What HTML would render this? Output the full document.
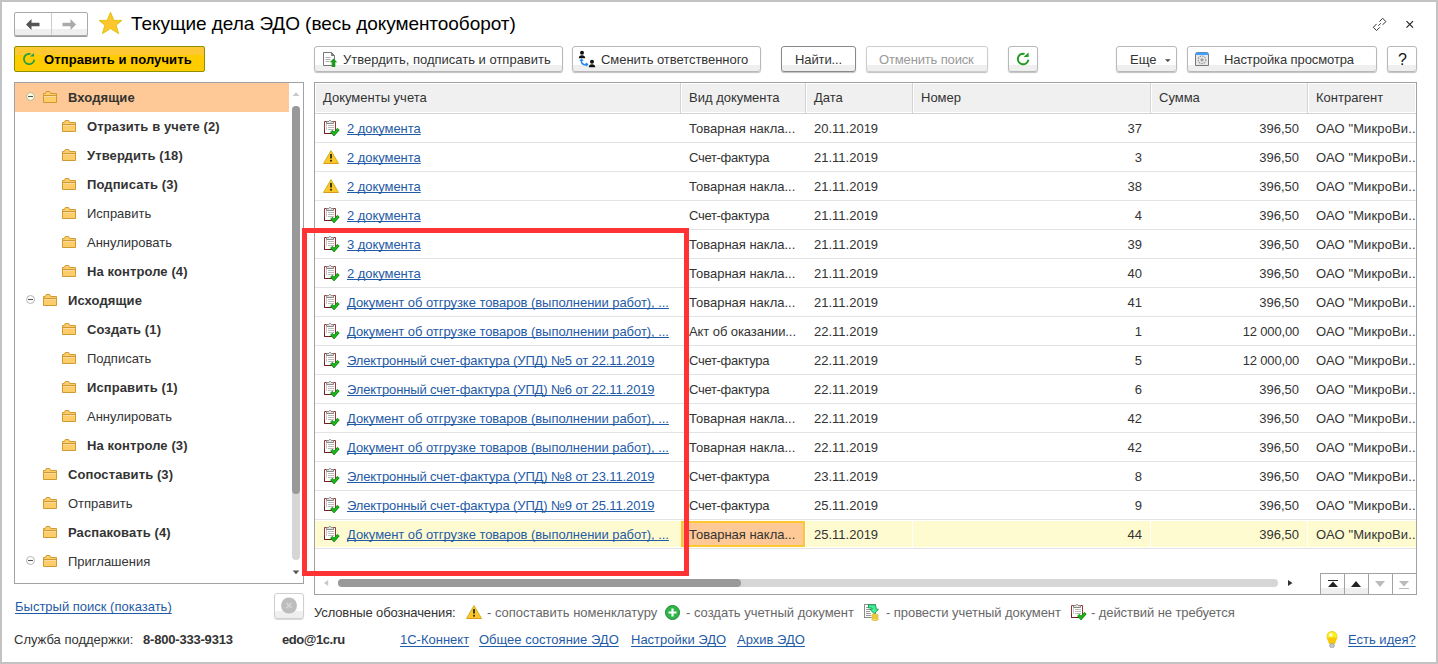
<!DOCTYPE html><html><head><meta charset="utf-8"><style>
*{box-sizing:border-box;margin:0;padding:0}
svg{display:block}
html,body{width:1438px;height:664px;overflow:hidden;background:#fff}
body{font-family:"Liberation Sans",sans-serif;font-size:13px;color:#333;position:relative}
.abs{position:absolute}
#win{position:absolute;left:0;top:0;width:1438px;height:664px;border:2px solid #c3c3c3;background:#fff}
.btn{position:absolute;top:46px;height:26px;border:1px solid #b8b8b8;border-radius:3px;background:linear-gradient(#fff 0,#fff 73%,#efefef 73%,#efefef 100%);box-shadow:0 1px 1px rgba(0,0,0,0.25);white-space:nowrap;color:#333;line-height:25px}
.t{position:absolute;white-space:nowrap;line-height:15px}
.b{font-weight:bold}
a,.lnk{color:#1f5ba6;text-decoration:underline;text-decoration-skip-ink:none}
.tree-row{position:absolute;left:15px;width:275px;height:29px}
.fl{text-underline-offset:2px}
.grow{position:absolute;left:315px;width:1101px;height:29px;border-bottom:1px solid #e3e3e3}
.hcell{position:absolute;top:83px;height:30px;background:#f0f0f0;border:1px solid #fff;border-right-color:#fff}
</style></head><body>
<div id="win"></div>

<div class="abs" style="left:14px;top:12px;width:74px;height:24px;border:1px solid #aaa;border-radius:2px;background:linear-gradient(#fff 0,#fff 72%,#efefef 72%);box-shadow:0 1px 0 #999"></div>
<div class="abs" style="left:51px;top:13px;width:1px;height:22px;background:#ccc"></div>
<svg class="abs" style="left:26px;top:19px" width="14" height="11" viewBox="0 0 14 11"><path d="M0 5.5L5.5 0v3.8h8v3.4h-8V11z" fill="#555"/></svg>
<svg class="abs" style="left:62px;top:19px" width="14" height="11" viewBox="0 0 14 11"><path d="M14 5.5L8.5 0v3.8h-8v3.4h8V11z" fill="#aaa"/></svg>
<svg class="abs" style="left:98px;top:11px" width="25" height="24" viewBox="0 0 25 24"><path d="M12.5 1.2L15.9 9.4H24L18.1 14.2L20.7 22.7L12.5 17.6L4.3 22.7L6.9 14.2L1 9.4H9.1z" fill="#fec52e" stroke="#d8c400" stroke-width="0.9" stroke-linejoin="miter"/></svg>
<div class="t" style="left:131px;top:13px;font-size:19px;line-height:22px;color:#000;letter-spacing:-0.06px">Текущие дела ЭДО (весь документооборот)</div>
<svg class="abs" style="left:1366px;top:12px" width="24" height="24" viewBox="0 0 24 24"><path d="M13.5 9.6L16.6 6.3L19.9 9.5L16.7 12.8M10.6 11.9L7.3 15.3L10.5 18.6L13.8 15.3M12.3 13.8L14.8 11.3" fill="none" stroke="#333" stroke-width="1"/></svg>
<svg class="abs" style="left:1405px;top:20px" width="9" height="9" viewBox="0 0 9 9"><path d="M1.5 1.2l6.5 6.5M8 1.2l-6.5 6.5" stroke="#222" stroke-width="1.2"/></svg>
<div class="abs" style="left:14px;top:46px;width:191px;height:26px;border:1px solid #8c9000;border-radius:2px;background:linear-gradient(#fec832 0,#fec832 33%,#ffcc00 33%)"></div>
<svg class="abs" style="left:21px;top:51px" width="16" height="16" viewBox="0 0 16 16"><path d="M13.3 8.6A5.2 5.2 0 1 1 9.6 3" fill="none" stroke="#1f9d45" stroke-width="1.7"/><path d="M9 5.6L13 5.6L13 2z" fill="#1f9d45"/></svg>
<div class="t b" style="left:44px;top:52px;color:#000;letter-spacing:0.1px">Отправить и получить</div>
<div class="abs" style="left:14px;top:82px;width:290px;height:502px;border:1px solid #a2a2a4"></div>
<div class="abs" style="left:15px;top:83px;width:274px;height:29px;background:#fec996"></div>
<div class="abs" style="left:26px;top:92px"><svg width="9" height="9" viewBox="0 0 9 9"><circle cx="4.5" cy="4.5" r="4" fill="#fdfde6" stroke="#b5b58a"/><path d="M2 4.5h5" stroke="#555" stroke-width="1.1"/></svg></div>
<div class="abs" style="left:43px;top:91px"><svg width="14" height="12" viewBox="0 0 14 12"><path d="M0.5 2.5H2.3L3.3 0.5H6.7L7.7 2.5H13.5V11.5H0.5Z" fill="#fdcd6a" stroke="#cf9a32"/><path d="M1 4.5h12" stroke="#cf9a32"/><path d="M1 5.5h12" stroke="#ffd9a6"/></svg></div>
<div class="t b" style="left:68px;top:90px;letter-spacing:0.1px">Входящие</div>
<div class="abs" style="left:62px;top:120px"><svg width="14" height="12" viewBox="0 0 14 12"><path d="M0.5 2.5H2.3L3.3 0.5H6.7L7.7 2.5H13.5V11.5H0.5Z" fill="#fdcd6a" stroke="#cf9a32"/><path d="M1 4.5h12" stroke="#cf9a32"/><path d="M1 5.5h12" stroke="#ffd9a6"/></svg></div>
<div class="t b" style="left:87px;top:119px;letter-spacing:0.1px">Отразить в учете (2)</div>
<div class="abs" style="left:62px;top:149px"><svg width="14" height="12" viewBox="0 0 14 12"><path d="M0.5 2.5H2.3L3.3 0.5H6.7L7.7 2.5H13.5V11.5H0.5Z" fill="#fdcd6a" stroke="#cf9a32"/><path d="M1 4.5h12" stroke="#cf9a32"/><path d="M1 5.5h12" stroke="#ffd9a6"/></svg></div>
<div class="t b" style="left:87px;top:148px;letter-spacing:0.1px">Утвердить (18)</div>
<div class="abs" style="left:62px;top:178px"><svg width="14" height="12" viewBox="0 0 14 12"><path d="M0.5 2.5H2.3L3.3 0.5H6.7L7.7 2.5H13.5V11.5H0.5Z" fill="#fdcd6a" stroke="#cf9a32"/><path d="M1 4.5h12" stroke="#cf9a32"/><path d="M1 5.5h12" stroke="#ffd9a6"/></svg></div>
<div class="t b" style="left:87px;top:177px;letter-spacing:0.1px">Подписать (3)</div>
<div class="abs" style="left:62px;top:207px"><svg width="14" height="12" viewBox="0 0 14 12"><path d="M0.5 2.5H2.3L3.3 0.5H6.7L7.7 2.5H13.5V11.5H0.5Z" fill="#fdcd6a" stroke="#cf9a32"/><path d="M1 4.5h12" stroke="#cf9a32"/><path d="M1 5.5h12" stroke="#ffd9a6"/></svg></div>
<div class="t" style="left:87px;top:206px;">Исправить</div>
<div class="abs" style="left:62px;top:236px"><svg width="14" height="12" viewBox="0 0 14 12"><path d="M0.5 2.5H2.3L3.3 0.5H6.7L7.7 2.5H13.5V11.5H0.5Z" fill="#fdcd6a" stroke="#cf9a32"/><path d="M1 4.5h12" stroke="#cf9a32"/><path d="M1 5.5h12" stroke="#ffd9a6"/></svg></div>
<div class="t" style="left:87px;top:235px;">Аннулировать</div>
<div class="abs" style="left:62px;top:265px"><svg width="14" height="12" viewBox="0 0 14 12"><path d="M0.5 2.5H2.3L3.3 0.5H6.7L7.7 2.5H13.5V11.5H0.5Z" fill="#fdcd6a" stroke="#cf9a32"/><path d="M1 4.5h12" stroke="#cf9a32"/><path d="M1 5.5h12" stroke="#ffd9a6"/></svg></div>
<div class="t b" style="left:87px;top:264px;letter-spacing:0.1px">На контроле (4)</div>
<div class="abs" style="left:26px;top:295px"><svg width="9" height="9" viewBox="0 0 9 9"><circle cx="4.5" cy="4.5" r="4" fill="#fff" stroke="#b4b4b4"/><path d="M2 4.5h5" stroke="#555" stroke-width="1.1"/></svg></div>
<div class="abs" style="left:43px;top:294px"><svg width="14" height="12" viewBox="0 0 14 12"><path d="M0.5 2.5H2.3L3.3 0.5H6.7L7.7 2.5H13.5V11.5H0.5Z" fill="#fdcd6a" stroke="#cf9a32"/><path d="M1 4.5h12" stroke="#cf9a32"/><path d="M1 5.5h12" stroke="#ffd9a6"/></svg></div>
<div class="t b" style="left:68px;top:293px;letter-spacing:0.1px">Исходящие</div>
<div class="abs" style="left:62px;top:323px"><svg width="14" height="12" viewBox="0 0 14 12"><path d="M0.5 2.5H2.3L3.3 0.5H6.7L7.7 2.5H13.5V11.5H0.5Z" fill="#fdcd6a" stroke="#cf9a32"/><path d="M1 4.5h12" stroke="#cf9a32"/><path d="M1 5.5h12" stroke="#ffd9a6"/></svg></div>
<div class="t b" style="left:87px;top:322px;letter-spacing:0.1px">Создать (1)</div>
<div class="abs" style="left:62px;top:352px"><svg width="14" height="12" viewBox="0 0 14 12"><path d="M0.5 2.5H2.3L3.3 0.5H6.7L7.7 2.5H13.5V11.5H0.5Z" fill="#fdcd6a" stroke="#cf9a32"/><path d="M1 4.5h12" stroke="#cf9a32"/><path d="M1 5.5h12" stroke="#ffd9a6"/></svg></div>
<div class="t" style="left:87px;top:351px;">Подписать</div>
<div class="abs" style="left:62px;top:381px"><svg width="14" height="12" viewBox="0 0 14 12"><path d="M0.5 2.5H2.3L3.3 0.5H6.7L7.7 2.5H13.5V11.5H0.5Z" fill="#fdcd6a" stroke="#cf9a32"/><path d="M1 4.5h12" stroke="#cf9a32"/><path d="M1 5.5h12" stroke="#ffd9a6"/></svg></div>
<div class="t b" style="left:87px;top:380px;letter-spacing:0.1px">Исправить (1)</div>
<div class="abs" style="left:62px;top:410px"><svg width="14" height="12" viewBox="0 0 14 12"><path d="M0.5 2.5H2.3L3.3 0.5H6.7L7.7 2.5H13.5V11.5H0.5Z" fill="#fdcd6a" stroke="#cf9a32"/><path d="M1 4.5h12" stroke="#cf9a32"/><path d="M1 5.5h12" stroke="#ffd9a6"/></svg></div>
<div class="t" style="left:87px;top:409px;">Аннулировать</div>
<div class="abs" style="left:62px;top:439px"><svg width="14" height="12" viewBox="0 0 14 12"><path d="M0.5 2.5H2.3L3.3 0.5H6.7L7.7 2.5H13.5V11.5H0.5Z" fill="#fdcd6a" stroke="#cf9a32"/><path d="M1 4.5h12" stroke="#cf9a32"/><path d="M1 5.5h12" stroke="#ffd9a6"/></svg></div>
<div class="t b" style="left:87px;top:438px;letter-spacing:0.1px">На контроле (3)</div>
<div class="abs" style="left:43px;top:468px"><svg width="14" height="12" viewBox="0 0 14 12"><path d="M0.5 2.5H2.3L3.3 0.5H6.7L7.7 2.5H13.5V11.5H0.5Z" fill="#fdcd6a" stroke="#cf9a32"/><path d="M1 4.5h12" stroke="#cf9a32"/><path d="M1 5.5h12" stroke="#ffd9a6"/></svg></div>
<div class="t b" style="left:68px;top:467px;letter-spacing:0.1px">Сопоставить (3)</div>
<div class="abs" style="left:43px;top:497px"><svg width="14" height="12" viewBox="0 0 14 12"><path d="M0.5 2.5H2.3L3.3 0.5H6.7L7.7 2.5H13.5V11.5H0.5Z" fill="#fdcd6a" stroke="#cf9a32"/><path d="M1 4.5h12" stroke="#cf9a32"/><path d="M1 5.5h12" stroke="#ffd9a6"/></svg></div>
<div class="t" style="left:68px;top:496px;">Отправить</div>
<div class="abs" style="left:43px;top:526px"><svg width="14" height="12" viewBox="0 0 14 12"><path d="M0.5 2.5H2.3L3.3 0.5H6.7L7.7 2.5H13.5V11.5H0.5Z" fill="#fdcd6a" stroke="#cf9a32"/><path d="M1 4.5h12" stroke="#cf9a32"/><path d="M1 5.5h12" stroke="#ffd9a6"/></svg></div>
<div class="t b" style="left:68px;top:525px;letter-spacing:0.1px">Распаковать (4)</div>
<div class="abs" style="left:26px;top:556px"><svg width="9" height="9" viewBox="0 0 9 9"><circle cx="4.5" cy="4.5" r="4" fill="#fff" stroke="#b4b4b4"/><path d="M2 4.5h5" stroke="#555" stroke-width="1.1"/></svg></div>
<div class="abs" style="left:43px;top:555px"><svg width="14" height="12" viewBox="0 0 14 12"><path d="M0.5 2.5H2.3L3.3 0.5H6.7L7.7 2.5H13.5V11.5H0.5Z" fill="#fdcd6a" stroke="#cf9a32"/><path d="M1 4.5h12" stroke="#cf9a32"/><path d="M1 5.5h12" stroke="#ffd9a6"/></svg></div>
<div class="t" style="left:68px;top:554px;">Приглашения</div>
<svg class="abs" style="left:292px;top:92px" width="8" height="5" viewBox="0 0 8 5"><path d="M4 0.3L7.3 4H0.7z" fill="#c8c8c8"/></svg>
<div class="abs" style="left:292px;top:106px;width:8px;height:454px;border-radius:4px;background:#d6d6d6"></div>
<div class="abs" style="left:292px;top:106px;width:8px;height:388px;border-radius:4px;background:#999"></div>
<svg class="abs" style="left:292px;top:570px" width="8" height="5" viewBox="0 0 8 5"><path d="M0.7 0.5H7.3L4 4.3z" fill="#555"/></svg>
<div class="btn" style="left:314px;width:249px;"><svg class="abs" style="left:8px;top:5px" width="16" height="16" viewBox="0 0 16 16"><path d="M0.5 0.5H8.5L11.5 3.5V13.5H0.5Z" fill="#fff" stroke="#777"/><path d="M8.5 0.5V3.5H11.5" fill="#888" stroke="#777"/><path d="M2.5 5.5h5M2.5 7.5h5M2.5 9.5h4" stroke="#aaa"/><path d="M10.5 6.5L14.3 10.3H12.3V15H8.7V10.3H6.7Z" fill="#1c9a1c"/></svg><span class="abs" style="left:28px;top:0">Утвердить, подписать и отправить</span></div>
<div class="btn" style="left:572px;width:189px;"><svg class="abs" style="left:3px;top:3px" width="22" height="19" viewBox="0 0 22 19"><circle cx="6" cy="2.8" r="2" fill="#111"/><path d="M2.8 8.2a3.2 3 0 0 1 6.4 0z" fill="#111"/><circle cx="16" cy="11.8" r="2" fill="#111"/><path d="M12.8 17.2a3.2 3 0 0 1 6.4 0z" fill="#111"/><path d="M5.5 9.5V11.8Q5.5 14 8.5 14.8H10" fill="none" stroke="#2a8cf0" stroke-width="1.6"/><path d="M3.3 11L5.5 8.2L7.7 11z" fill="#2a8cf0"/><path d="M10.5 12.6L12.5 14.6L10.5 16.6L8.5 14.6z" fill="#2a8cf0"/></svg><span class="abs" style="left:28px;top:0;letter-spacing:-0.05px">Сменить ответственного</span></div>
<div class="btn" style="left:781px;width:75px;border-color:#888"><span class="abs" style="left:13px;top:0;letter-spacing:-0.1px">Найти...</span></div>
<div class="btn" style="left:866px;width:122px;border-color:#ccc"><span class="abs" style="left:12px;top:0;color:#999;letter-spacing:-0.15px">Отменить поиск</span></div>
<div class="btn" style="left:1008px;width:30px;"><svg class="abs" style="left:6px;top:4px" width="16" height="16" viewBox="0 0 16 16"><path d="M13.4 8.6A5.3 5.3 0 1 1 9.6 2.9" fill="none" stroke="#1e9a1e" stroke-width="1.9"/><path d="M8.6 6L13.6 6L13.6 1.6z" fill="#1e9a1e"/></svg></div>
<div class="btn" style="left:1116px;width:61px;"><span class="abs" style="left:13px;top:0">Еще</span><svg class="abs" style="left:48px;top:12px" width="6" height="4"><path d="M0 0.2h5.6L2.8 3z" fill="#444"/></svg></div>
<div class="btn" style="left:1187px;width:190px;"><svg class="abs" style="left:7px;top:5px" width="14" height="14" viewBox="0 0 14 14"><path d="M0.5 2.5Q0.5 0.5 2.5 0.5H11.5Q13.5 0.5 13.5 2.5V13.5H0.5Z" fill="#e8e8e8" stroke="#777"/><path d="M0.5 3V2Q0.5 0.5 2.5 0.5H11.5Q13.5 0.5 13.5 2V3Z" fill="#3ea0ff"/><circle cx="7" cy="7.8" r="3.8" fill="none" stroke="#999" stroke-width="1.2" stroke-dasharray="1.6 0.9"/><circle cx="7" cy="7.8" r="1.6" fill="#999"/></svg><span class="abs" style="left:36px;top:0;letter-spacing:-0.1px">Настройка просмотра</span></div>
<div class="btn" style="left:1387px;width:30px;"><span class="abs" style="left:10px;top:0;color:#111;font-size:16px">?</span></div>
<div class="abs" style="left:314px;top:82px;width:1103px;height:513px;border:1px solid #a2a2a4"></div>
<div class="abs" style="left:315px;top:83px;width:366px;height:30px;background:#f0f0f0;border:1px solid #fff"></div>
<div class="t" style="left:323px;top:90px">Документы учета</div>
<div class="abs" style="left:681px;top:83px;width:125px;height:30px;background:#f0f0f0;border:1px solid #fff"></div>
<div class="t" style="left:689px;top:90px">Вид документа</div>
<div class="abs" style="left:806px;top:83px;width:107px;height:30px;background:#f0f0f0;border:1px solid #fff"></div>
<div class="t" style="left:814px;top:90px">Дата</div>
<div class="abs" style="left:913px;top:83px;width:238px;height:30px;background:#f0f0f0;border:1px solid #fff"></div>
<div class="t" style="left:921px;top:90px">Номер</div>
<div class="abs" style="left:1151px;top:83px;width:157px;height:30px;background:#f0f0f0;border:1px solid #fff"></div>
<div class="t" style="left:1159px;top:90px">Сумма</div>
<div class="abs" style="left:1308px;top:83px;width:108px;height:30px;background:#f0f0f0;border:1px solid #fff"></div>
<div class="t" style="left:1316px;top:90px">Контрагент</div>
<div class="abs" style="left:680px;top:83px;width:1px;height:30px;background:#d4d4d4"></div>
<div class="abs" style="left:805px;top:83px;width:1px;height:30px;background:#d4d4d4"></div>
<div class="abs" style="left:912px;top:83px;width:1px;height:30px;background:#d4d4d4"></div>
<div class="abs" style="left:1150px;top:83px;width:1px;height:30px;background:#d4d4d4"></div>
<div class="abs" style="left:1307px;top:83px;width:1px;height:30px;background:#d4d4d4"></div>
<div class="abs" style="left:315px;top:113px;width:1101px;height:1px;background:#d4d4d4"></div>
<div class="abs" style="left:315px;top:114px;width:1101px;height:28px;background:#fff"></div>
<div class="abs" style="left:315px;top:142px;width:1101px;height:1px;background:#e3e3e3"></div>
<div class="abs" style="left:324px;top:120px"><svg width="16" height="16" viewBox="0 0 16 16"><path d="M0.5 1.5h11v12h-11z" fill="#fff" stroke="#9c3434"/><path d="M0.5 9.5v4h7" fill="none" stroke="#6b2020"/><path d="M2.5 3.5v-2h2l1-1h1l1 1h2v2z" fill="#e0e0e0" stroke="#888"/><path d="M4 5.5h6M4 7.5h6M4 9.5h6" stroke="#bbb"/><path d="M2 5h1M2 7h1M2 9h1" stroke="#999"/><path d="M7.3 11l2.7 3 4.5-5" fill="none" stroke="#137a13" stroke-width="3.2"/><path d="M7.3 11l2.7 3 4.5-5" fill="none" stroke="#19c219" stroke-width="1.6"/></svg></div>
<div class="t lnk" style="left:347px;top:121px;letter-spacing:-0.05px">2 документа</div>
<div class="t" style="left:689px;top:121px;color:#333;letter-spacing:0">Товарная накла...</div>
<div class="t" style="left:814px;top:121px">20.11.2019</div>
<div class="t" style="right:296px;top:121px">37</div>
<div class="t" style="right:139px;top:121px;letter-spacing:0">396,50</div>
<div class="t" style="left:1316px;top:121px;width:100px;overflow:hidden;letter-spacing:0.12px">ОАО "МикроВи..</div>
<div class="abs" style="left:315px;top:143px;width:1101px;height:28px;background:#fff"></div>
<div class="abs" style="left:315px;top:171px;width:1101px;height:1px;background:#e3e3e3"></div>
<div class="abs" style="left:323px;top:150px"><svg width="16" height="14" viewBox="0 0 16 14"><path d="M8 0.6L15.5 13.5H0.5z" fill="#fdc72a" stroke="#c8b420" stroke-linejoin="round"/><path d="M1 13.5h14" stroke="#d99a1a"/><path d="M8 4v4.5" stroke="#2a2a00" stroke-width="1.8"/><rect x="7.1" y="9.8" width="1.8" height="1.8" fill="#2a2a00"/></svg></div>
<div class="t lnk" style="left:347px;top:150px;letter-spacing:-0.05px">2 документа</div>
<div class="t" style="left:689px;top:150px;color:#333;letter-spacing:-0.3px">Счет-фактура</div>
<div class="t" style="left:814px;top:150px">21.11.2019</div>
<div class="t" style="right:296px;top:150px">3</div>
<div class="t" style="right:139px;top:150px;letter-spacing:0">396,50</div>
<div class="t" style="left:1316px;top:150px;width:100px;overflow:hidden;letter-spacing:0.12px">ОАО "МикроВи..</div>
<div class="abs" style="left:315px;top:172px;width:1101px;height:28px;background:#fff"></div>
<div class="abs" style="left:315px;top:200px;width:1101px;height:1px;background:#e3e3e3"></div>
<div class="abs" style="left:323px;top:179px"><svg width="16" height="14" viewBox="0 0 16 14"><path d="M8 0.6L15.5 13.5H0.5z" fill="#fdc72a" stroke="#c8b420" stroke-linejoin="round"/><path d="M1 13.5h14" stroke="#d99a1a"/><path d="M8 4v4.5" stroke="#2a2a00" stroke-width="1.8"/><rect x="7.1" y="9.8" width="1.8" height="1.8" fill="#2a2a00"/></svg></div>
<div class="t lnk" style="left:347px;top:179px;letter-spacing:-0.05px">2 документа</div>
<div class="t" style="left:689px;top:179px;color:#333;letter-spacing:0">Товарная накла...</div>
<div class="t" style="left:814px;top:179px">21.11.2019</div>
<div class="t" style="right:296px;top:179px">38</div>
<div class="t" style="right:139px;top:179px;letter-spacing:0">396,50</div>
<div class="t" style="left:1316px;top:179px;width:100px;overflow:hidden;letter-spacing:0.12px">ОАО "МикроВи..</div>
<div class="abs" style="left:315px;top:201px;width:1101px;height:28px;background:#fff"></div>
<div class="abs" style="left:315px;top:229px;width:1101px;height:1px;background:#e3e3e3"></div>
<div class="abs" style="left:324px;top:207px"><svg width="16" height="16" viewBox="0 0 16 16"><path d="M0.5 1.5h11v12h-11z" fill="#fff" stroke="#9c3434"/><path d="M0.5 9.5v4h7" fill="none" stroke="#6b2020"/><path d="M2.5 3.5v-2h2l1-1h1l1 1h2v2z" fill="#e0e0e0" stroke="#888"/><path d="M4 5.5h6M4 7.5h6M4 9.5h6" stroke="#bbb"/><path d="M2 5h1M2 7h1M2 9h1" stroke="#999"/><path d="M7.3 11l2.7 3 4.5-5" fill="none" stroke="#137a13" stroke-width="3.2"/><path d="M7.3 11l2.7 3 4.5-5" fill="none" stroke="#19c219" stroke-width="1.6"/></svg></div>
<div class="t lnk" style="left:347px;top:208px;letter-spacing:-0.05px">2 документа</div>
<div class="t" style="left:689px;top:208px;color:#333;letter-spacing:-0.3px">Счет-фактура</div>
<div class="t" style="left:814px;top:208px">21.11.2019</div>
<div class="t" style="right:296px;top:208px">4</div>
<div class="t" style="right:139px;top:208px;letter-spacing:0">396,50</div>
<div class="t" style="left:1316px;top:208px;width:100px;overflow:hidden;letter-spacing:0.12px">ОАО "МикроВи..</div>
<div class="abs" style="left:315px;top:230px;width:1101px;height:28px;background:#fff"></div>
<div class="abs" style="left:315px;top:258px;width:1101px;height:1px;background:#e3e3e3"></div>
<div class="abs" style="left:324px;top:236px"><svg width="16" height="16" viewBox="0 0 16 16"><path d="M0.5 1.5h11v12h-11z" fill="#fff" stroke="#9c3434"/><path d="M0.5 9.5v4h7" fill="none" stroke="#6b2020"/><path d="M2.5 3.5v-2h2l1-1h1l1 1h2v2z" fill="#e0e0e0" stroke="#888"/><path d="M4 5.5h6M4 7.5h6M4 9.5h6" stroke="#bbb"/><path d="M2 5h1M2 7h1M2 9h1" stroke="#999"/><path d="M7.3 11l2.7 3 4.5-5" fill="none" stroke="#137a13" stroke-width="3.2"/><path d="M7.3 11l2.7 3 4.5-5" fill="none" stroke="#19c219" stroke-width="1.6"/></svg></div>
<div class="t lnk" style="left:347px;top:237px;letter-spacing:-0.05px">3 документа</div>
<div class="t" style="left:689px;top:237px;color:#333;letter-spacing:0">Товарная накла...</div>
<div class="t" style="left:814px;top:237px">21.11.2019</div>
<div class="t" style="right:296px;top:237px">39</div>
<div class="t" style="right:139px;top:237px;letter-spacing:0">396,50</div>
<div class="t" style="left:1316px;top:237px;width:100px;overflow:hidden;letter-spacing:0.12px">ОАО "МикроВи..</div>
<div class="abs" style="left:315px;top:259px;width:1101px;height:28px;background:#fff"></div>
<div class="abs" style="left:315px;top:287px;width:1101px;height:1px;background:#e3e3e3"></div>
<div class="abs" style="left:324px;top:265px"><svg width="16" height="16" viewBox="0 0 16 16"><path d="M0.5 1.5h11v12h-11z" fill="#fff" stroke="#9c3434"/><path d="M0.5 9.5v4h7" fill="none" stroke="#6b2020"/><path d="M2.5 3.5v-2h2l1-1h1l1 1h2v2z" fill="#e0e0e0" stroke="#888"/><path d="M4 5.5h6M4 7.5h6M4 9.5h6" stroke="#bbb"/><path d="M2 5h1M2 7h1M2 9h1" stroke="#999"/><path d="M7.3 11l2.7 3 4.5-5" fill="none" stroke="#137a13" stroke-width="3.2"/><path d="M7.3 11l2.7 3 4.5-5" fill="none" stroke="#19c219" stroke-width="1.6"/></svg></div>
<div class="t lnk" style="left:347px;top:266px;letter-spacing:-0.05px">2 документа</div>
<div class="t" style="left:689px;top:266px;color:#333;letter-spacing:0">Товарная накла...</div>
<div class="t" style="left:814px;top:266px">21.11.2019</div>
<div class="t" style="right:296px;top:266px">40</div>
<div class="t" style="right:139px;top:266px;letter-spacing:0">396,50</div>
<div class="t" style="left:1316px;top:266px;width:100px;overflow:hidden;letter-spacing:0.12px">ОАО "МикроВи..</div>
<div class="abs" style="left:315px;top:288px;width:1101px;height:28px;background:#fff"></div>
<div class="abs" style="left:315px;top:316px;width:1101px;height:1px;background:#e3e3e3"></div>
<div class="abs" style="left:324px;top:294px"><svg width="16" height="16" viewBox="0 0 16 16"><path d="M0.5 1.5h11v12h-11z" fill="#fff" stroke="#9c3434"/><path d="M0.5 9.5v4h7" fill="none" stroke="#6b2020"/><path d="M2.5 3.5v-2h2l1-1h1l1 1h2v2z" fill="#e0e0e0" stroke="#888"/><path d="M4 5.5h6M4 7.5h6M4 9.5h6" stroke="#bbb"/><path d="M2 5h1M2 7h1M2 9h1" stroke="#999"/><path d="M7.3 11l2.7 3 4.5-5" fill="none" stroke="#137a13" stroke-width="3.2"/><path d="M7.3 11l2.7 3 4.5-5" fill="none" stroke="#19c219" stroke-width="1.6"/></svg></div>
<div class="t lnk" style="left:347px;top:295px;letter-spacing:-0.05px">Документ об отгрузке товаров (выполнении работ), ...</div>
<div class="t" style="left:689px;top:295px;color:#333;letter-spacing:0">Товарная накла...</div>
<div class="t" style="left:814px;top:295px">21.11.2019</div>
<div class="t" style="right:296px;top:295px">41</div>
<div class="t" style="right:139px;top:295px;letter-spacing:0">396,50</div>
<div class="t" style="left:1316px;top:295px;width:100px;overflow:hidden;letter-spacing:0.12px">ОАО "МикроВи..</div>
<div class="abs" style="left:315px;top:317px;width:1101px;height:28px;background:#fff"></div>
<div class="abs" style="left:315px;top:345px;width:1101px;height:1px;background:#e3e3e3"></div>
<div class="abs" style="left:324px;top:323px"><svg width="16" height="16" viewBox="0 0 16 16"><path d="M0.5 1.5h11v12h-11z" fill="#fff" stroke="#9c3434"/><path d="M0.5 9.5v4h7" fill="none" stroke="#6b2020"/><path d="M2.5 3.5v-2h2l1-1h1l1 1h2v2z" fill="#e0e0e0" stroke="#888"/><path d="M4 5.5h6M4 7.5h6M4 9.5h6" stroke="#bbb"/><path d="M2 5h1M2 7h1M2 9h1" stroke="#999"/><path d="M7.3 11l2.7 3 4.5-5" fill="none" stroke="#137a13" stroke-width="3.2"/><path d="M7.3 11l2.7 3 4.5-5" fill="none" stroke="#19c219" stroke-width="1.6"/></svg></div>
<div class="t lnk" style="left:347px;top:324px;letter-spacing:-0.05px">Документ об отгрузке товаров (выполнении работ), ...</div>
<div class="t" style="left:689px;top:324px;color:#333;letter-spacing:-0.08px">Акт об оказании...</div>
<div class="t" style="left:814px;top:324px">22.11.2019</div>
<div class="t" style="right:296px;top:324px">1</div>
<div class="t" style="right:139px;top:324px;letter-spacing:-0.18px">12 000,00</div>
<div class="t" style="left:1316px;top:324px;width:100px;overflow:hidden;letter-spacing:0.12px">ОАО "МикроВи..</div>
<div class="abs" style="left:315px;top:346px;width:1101px;height:28px;background:#fff"></div>
<div class="abs" style="left:315px;top:374px;width:1101px;height:1px;background:#e3e3e3"></div>
<div class="abs" style="left:324px;top:352px"><svg width="16" height="16" viewBox="0 0 16 16"><path d="M0.5 1.5h11v12h-11z" fill="#fff" stroke="#9c3434"/><path d="M0.5 9.5v4h7" fill="none" stroke="#6b2020"/><path d="M2.5 3.5v-2h2l1-1h1l1 1h2v2z" fill="#e0e0e0" stroke="#888"/><path d="M4 5.5h6M4 7.5h6M4 9.5h6" stroke="#bbb"/><path d="M2 5h1M2 7h1M2 9h1" stroke="#999"/><path d="M7.3 11l2.7 3 4.5-5" fill="none" stroke="#137a13" stroke-width="3.2"/><path d="M7.3 11l2.7 3 4.5-5" fill="none" stroke="#19c219" stroke-width="1.6"/></svg></div>
<div class="t lnk" style="left:347px;top:353px;letter-spacing:-0.12px">Электронный счет-фактура (УПД) №5 от 22.11.2019</div>
<div class="t" style="left:689px;top:353px;color:#333;letter-spacing:-0.3px">Счет-фактура</div>
<div class="t" style="left:814px;top:353px">22.11.2019</div>
<div class="t" style="right:296px;top:353px">5</div>
<div class="t" style="right:139px;top:353px;letter-spacing:-0.18px">12 000,00</div>
<div class="t" style="left:1316px;top:353px;width:100px;overflow:hidden;letter-spacing:0.12px">ОАО "МикроВи..</div>
<div class="abs" style="left:315px;top:375px;width:1101px;height:28px;background:#fff"></div>
<div class="abs" style="left:315px;top:403px;width:1101px;height:1px;background:#e3e3e3"></div>
<div class="abs" style="left:324px;top:381px"><svg width="16" height="16" viewBox="0 0 16 16"><path d="M0.5 1.5h11v12h-11z" fill="#fff" stroke="#9c3434"/><path d="M0.5 9.5v4h7" fill="none" stroke="#6b2020"/><path d="M2.5 3.5v-2h2l1-1h1l1 1h2v2z" fill="#e0e0e0" stroke="#888"/><path d="M4 5.5h6M4 7.5h6M4 9.5h6" stroke="#bbb"/><path d="M2 5h1M2 7h1M2 9h1" stroke="#999"/><path d="M7.3 11l2.7 3 4.5-5" fill="none" stroke="#137a13" stroke-width="3.2"/><path d="M7.3 11l2.7 3 4.5-5" fill="none" stroke="#19c219" stroke-width="1.6"/></svg></div>
<div class="t lnk" style="left:347px;top:382px;letter-spacing:-0.12px">Электронный счет-фактура (УПД) №6 от 22.11.2019</div>
<div class="t" style="left:689px;top:382px;color:#333;letter-spacing:-0.3px">Счет-фактура</div>
<div class="t" style="left:814px;top:382px">22.11.2019</div>
<div class="t" style="right:296px;top:382px">6</div>
<div class="t" style="right:139px;top:382px;letter-spacing:0">396,50</div>
<div class="t" style="left:1316px;top:382px;width:100px;overflow:hidden;letter-spacing:0.12px">ОАО "МикроВи..</div>
<div class="abs" style="left:315px;top:404px;width:1101px;height:28px;background:#fff"></div>
<div class="abs" style="left:315px;top:432px;width:1101px;height:1px;background:#e3e3e3"></div>
<div class="abs" style="left:324px;top:410px"><svg width="16" height="16" viewBox="0 0 16 16"><path d="M0.5 1.5h11v12h-11z" fill="#fff" stroke="#9c3434"/><path d="M0.5 9.5v4h7" fill="none" stroke="#6b2020"/><path d="M2.5 3.5v-2h2l1-1h1l1 1h2v2z" fill="#e0e0e0" stroke="#888"/><path d="M4 5.5h6M4 7.5h6M4 9.5h6" stroke="#bbb"/><path d="M2 5h1M2 7h1M2 9h1" stroke="#999"/><path d="M7.3 11l2.7 3 4.5-5" fill="none" stroke="#137a13" stroke-width="3.2"/><path d="M7.3 11l2.7 3 4.5-5" fill="none" stroke="#19c219" stroke-width="1.6"/></svg></div>
<div class="t lnk" style="left:347px;top:411px;letter-spacing:-0.05px">Документ об отгрузке товаров (выполнении работ), ...</div>
<div class="t" style="left:689px;top:411px;color:#333;letter-spacing:0">Товарная накла...</div>
<div class="t" style="left:814px;top:411px">22.11.2019</div>
<div class="t" style="right:296px;top:411px">42</div>
<div class="t" style="right:139px;top:411px;letter-spacing:0">396,50</div>
<div class="t" style="left:1316px;top:411px;width:100px;overflow:hidden;letter-spacing:0.12px">ОАО "МикроВи..</div>
<div class="abs" style="left:315px;top:433px;width:1101px;height:28px;background:#fff"></div>
<div class="abs" style="left:315px;top:461px;width:1101px;height:1px;background:#e3e3e3"></div>
<div class="abs" style="left:324px;top:439px"><svg width="16" height="16" viewBox="0 0 16 16"><path d="M0.5 1.5h11v12h-11z" fill="#fff" stroke="#9c3434"/><path d="M0.5 9.5v4h7" fill="none" stroke="#6b2020"/><path d="M2.5 3.5v-2h2l1-1h1l1 1h2v2z" fill="#e0e0e0" stroke="#888"/><path d="M4 5.5h6M4 7.5h6M4 9.5h6" stroke="#bbb"/><path d="M2 5h1M2 7h1M2 9h1" stroke="#999"/><path d="M7.3 11l2.7 3 4.5-5" fill="none" stroke="#137a13" stroke-width="3.2"/><path d="M7.3 11l2.7 3 4.5-5" fill="none" stroke="#19c219" stroke-width="1.6"/></svg></div>
<div class="t lnk" style="left:347px;top:440px;letter-spacing:-0.05px">Документ об отгрузке товаров (выполнении работ), ...</div>
<div class="t" style="left:689px;top:440px;color:#333;letter-spacing:0">Товарная накла...</div>
<div class="t" style="left:814px;top:440px">22.11.2019</div>
<div class="t" style="right:296px;top:440px">42</div>
<div class="t" style="right:139px;top:440px;letter-spacing:0">396,50</div>
<div class="t" style="left:1316px;top:440px;width:100px;overflow:hidden;letter-spacing:0.12px">ОАО "МикроВи..</div>
<div class="abs" style="left:315px;top:462px;width:1101px;height:28px;background:#fff"></div>
<div class="abs" style="left:315px;top:490px;width:1101px;height:1px;background:#e3e3e3"></div>
<div class="abs" style="left:324px;top:468px"><svg width="16" height="16" viewBox="0 0 16 16"><path d="M0.5 1.5h11v12h-11z" fill="#fff" stroke="#9c3434"/><path d="M0.5 9.5v4h7" fill="none" stroke="#6b2020"/><path d="M2.5 3.5v-2h2l1-1h1l1 1h2v2z" fill="#e0e0e0" stroke="#888"/><path d="M4 5.5h6M4 7.5h6M4 9.5h6" stroke="#bbb"/><path d="M2 5h1M2 7h1M2 9h1" stroke="#999"/><path d="M7.3 11l2.7 3 4.5-5" fill="none" stroke="#137a13" stroke-width="3.2"/><path d="M7.3 11l2.7 3 4.5-5" fill="none" stroke="#19c219" stroke-width="1.6"/></svg></div>
<div class="t lnk" style="left:347px;top:469px;letter-spacing:-0.12px">Электронный счет-фактура (УПД) №8 от 23.11.2019</div>
<div class="t" style="left:689px;top:469px;color:#333;letter-spacing:-0.3px">Счет-фактура</div>
<div class="t" style="left:814px;top:469px">23.11.2019</div>
<div class="t" style="right:296px;top:469px">8</div>
<div class="t" style="right:139px;top:469px;letter-spacing:0">396,50</div>
<div class="t" style="left:1316px;top:469px;width:100px;overflow:hidden;letter-spacing:0.12px">ОАО "МикроВи..</div>
<div class="abs" style="left:315px;top:491px;width:1101px;height:28px;background:#fff"></div>
<div class="abs" style="left:315px;top:519px;width:1101px;height:1px;background:#e3e3e3"></div>
<div class="abs" style="left:324px;top:497px"><svg width="16" height="16" viewBox="0 0 16 16"><path d="M0.5 1.5h11v12h-11z" fill="#fff" stroke="#9c3434"/><path d="M0.5 9.5v4h7" fill="none" stroke="#6b2020"/><path d="M2.5 3.5v-2h2l1-1h1l1 1h2v2z" fill="#e0e0e0" stroke="#888"/><path d="M4 5.5h6M4 7.5h6M4 9.5h6" stroke="#bbb"/><path d="M2 5h1M2 7h1M2 9h1" stroke="#999"/><path d="M7.3 11l2.7 3 4.5-5" fill="none" stroke="#137a13" stroke-width="3.2"/><path d="M7.3 11l2.7 3 4.5-5" fill="none" stroke="#19c219" stroke-width="1.6"/></svg></div>
<div class="t lnk" style="left:347px;top:498px;letter-spacing:-0.12px">Электронный счет-фактура (УПД) №9 от 25.11.2019</div>
<div class="t" style="left:689px;top:498px;color:#333;letter-spacing:-0.3px">Счет-фактура</div>
<div class="t" style="left:814px;top:498px">25.11.2019</div>
<div class="t" style="right:296px;top:498px">9</div>
<div class="t" style="right:139px;top:498px;letter-spacing:0">396,50</div>
<div class="t" style="left:1316px;top:498px;width:100px;overflow:hidden;letter-spacing:0.12px">ОАО "МикроВи..</div>
<div class="abs" style="left:315px;top:520px;width:1101px;height:28px;background:#fff"></div>
<div class="abs" style="left:315px;top:548px;width:1101px;height:1px;background:#e3e3e3"></div>
<div class="abs" style="left:315px;top:521px;width:1101px;height:26px;background:#fffbd0"></div>
<div class="abs" style="left:805px;top:521px;width:1px;height:26px;background:#fff"></div>
<div class="abs" style="left:912px;top:521px;width:1px;height:26px;background:#fff"></div>
<div class="abs" style="left:1150px;top:521px;width:1px;height:26px;background:#fff"></div>
<div class="abs" style="left:1307px;top:521px;width:1px;height:26px;background:#fff"></div>
<div class="abs" style="left:681px;top:521px;width:124px;height:26px;background:#fec996;border:2px solid #ffc830"></div>
<div class="abs" style="left:324px;top:526px"><svg width="16" height="16" viewBox="0 0 16 16"><path d="M0.5 1.5h11v12h-11z" fill="#fff" stroke="#9c3434"/><path d="M0.5 9.5v4h7" fill="none" stroke="#6b2020"/><path d="M2.5 3.5v-2h2l1-1h1l1 1h2v2z" fill="#e0e0e0" stroke="#888"/><path d="M4 5.5h6M4 7.5h6M4 9.5h6" stroke="#bbb"/><path d="M2 5h1M2 7h1M2 9h1" stroke="#999"/><path d="M7.3 11l2.7 3 4.5-5" fill="none" stroke="#137a13" stroke-width="3.2"/><path d="M7.3 11l2.7 3 4.5-5" fill="none" stroke="#19c219" stroke-width="1.6"/></svg></div>
<div class="t lnk" style="left:347px;top:527px;letter-spacing:-0.05px">Документ об отгрузке товаров (выполнении работ), ...</div>
<div class="t" style="left:689px;top:527px;color:#333;letter-spacing:0">Товарная накла...</div>
<div class="t" style="left:814px;top:527px">25.11.2019</div>
<div class="t" style="right:296px;top:527px">44</div>
<div class="t" style="right:139px;top:527px;letter-spacing:0">396,50</div>
<div class="t" style="left:1316px;top:527px;width:100px;overflow:hidden;letter-spacing:0.12px">ОАО "МикроВи..</div>
<svg class="abs" style="left:324px;top:579px" width="5" height="8" viewBox="0 0 5 8"><path d="M4.2 1V7L0 4z" fill="#c8c8c8"/></svg>
<div class="abs" style="left:338px;top:579px;width:940px;height:8px;border-radius:4px;background:#d6d6d6"></div>
<div class="abs" style="left:338px;top:579px;width:403px;height:8px;border-radius:4px;background:#999"></div>
<svg class="abs" style="left:1288px;top:579px" width="5" height="8" viewBox="0 0 5 8"><path d="M0 1V7L4.5 4z" fill="#333"/></svg>
<div class="abs" style="left:1320px;top:573px;width:97px;height:22px;border:1px solid #a2a2a4;background:#fff"></div>
<div class="abs" style="left:1321px;top:588px;width:47px;height:6px;background:#efefef"></div>
<div class="abs" style="left:1344px;top:573px;width:1px;height:22px;background:#a2a2a4"></div>
<div class="abs" style="left:1368px;top:573px;width:1px;height:22px;background:#a2a2a4"></div>
<div class="abs" style="left:1392px;top:573px;width:1px;height:22px;background:#a2a2a4"></div>
<svg class="abs" style="left:1328px;top:580px" width="10" height="8"><path d="M0 0.5h10" stroke="#222"/><path d="M5 1.5L10 7H0z" fill="#222"/></svg>
<svg class="abs" style="left:1351px;top:581px" width="10" height="6"><path d="M5 0L10 6H0z" fill="#222"/></svg>
<svg class="abs" style="left:1375px;top:581px" width="10" height="6"><path d="M0 0H10L5 6z" fill="#bbb"/></svg>
<svg class="abs" style="left:1399px;top:581px" width="10" height="8"><path d="M0 0H10L5 5.5z" fill="#bbb"/><path d="M0 7.5h10" stroke="#bbb"/></svg>
<div class="t lnk fl" style="left:15px;top:599px">Быстрый поиск (показать)</div>
<div class="abs" style="left:274px;top:593px;width:30px;height:26px;border:1px solid #cfcfcf;border-radius:3px;background:linear-gradient(#fff 0,#fff 72%,#efefef 72%);box-shadow:0 1px 1px rgba(0,0,0,0.15)"></div>
<svg class="abs" style="left:281px;top:597px" width="17" height="17" viewBox="0 0 17 17"><circle cx="8" cy="8.5" r="8" fill="#bdbdbd"/><path d="M5.5 6l5 5M10.5 6l-5 5" stroke="#d6d6d6" stroke-width="1.5"/></svg>
<div class="t" style="left:314px;top:605px;letter-spacing:-0.12px">Условные обозначения:</div>
<div class="abs" style="left:466px;top:605px"><svg width="16" height="14" viewBox="0 0 16 14"><path d="M8 0.6L15.5 13.5H0.5z" fill="#fdc72a" stroke="#c8b420" stroke-linejoin="round"/><path d="M1 13.5h14" stroke="#d99a1a"/><path d="M8 4v4.5" stroke="#2a2a00" stroke-width="1.8"/><rect x="7.1" y="9.8" width="1.8" height="1.8" fill="#2a2a00"/></svg></div>
<div class="t" style="left:487px;top:605px;color:#686868">- сопоставить номенклатуру</div>
<svg class="abs" style="left:665px;top:605px" width="15" height="15" viewBox="0 0 15 15"><circle cx="7.5" cy="7.5" r="7" fill="#2fb54a" stroke="#1e8a32"/><path d="M7.5 3.5v8M3.5 7.5h8" stroke="#fff" stroke-width="2.2"/></svg>
<div class="t" style="left:686px;top:605px;color:#686868">- создать учетный документ</div>
<svg class="abs" style="left:864px;top:604px" width="17" height="17" viewBox="0 0 17 17"><rect x="0.5" y="0.5" width="11" height="13" fill="#fff" stroke="#8a8a8a"/><path d="M2 3.5h2M2 5.5h4M2 7.5h4M2 9.5h5M2 11.5h5" stroke="#9a9a9a"/><path d="M4.5 0.8H9.8Q12 0.8 12 3V5.2H14.5L10.2 9.8L5.8 5.2H8.2V4H4.5Z" fill="#3df59a" stroke="#17944a" stroke-width="0.9"/><ellipse cx="11" cy="11.2" rx="3.3" ry="1.2" fill="#f7ec5a" stroke="#d49a20" stroke-width="0.7"/><ellipse cx="11" cy="13.2" rx="3.3" ry="1.2" fill="#f7ec5a" stroke="#d49a20" stroke-width="0.7"/><ellipse cx="11" cy="15.2" rx="3.3" ry="1.2" fill="#f7ec5a" stroke="#d49a20" stroke-width="0.7"/></svg>
<div class="t" style="left:886px;top:605px;color:#686868;letter-spacing:-0.06px">- провести учетный документ</div>
<div class="abs" style="left:1071px;top:604px"><svg width="16" height="16" viewBox="0 0 16 16"><path d="M0.5 1.5h11v12h-11z" fill="#fff" stroke="#9c3434"/><path d="M0.5 9.5v4h7" fill="none" stroke="#6b2020"/><path d="M2.5 3.5v-2h2l1-1h1l1 1h2v2z" fill="#e0e0e0" stroke="#888"/><path d="M4 5.5h6M4 7.5h6M4 9.5h6" stroke="#bbb"/><path d="M2 5h1M2 7h1M2 9h1" stroke="#999"/><path d="M7.3 11l2.7 3 4.5-5" fill="none" stroke="#137a13" stroke-width="3.2"/><path d="M7.3 11l2.7 3 4.5-5" fill="none" stroke="#19c219" stroke-width="1.6"/></svg></div>
<div class="t" style="left:1091px;top:605px;color:#686868;letter-spacing:-0.08px">- действий не требуется</div>
<div class="t" style="left:14px;top:632px">Служба поддержки:</div>
<div class="t b" style="left:143px;top:632px;letter-spacing:-0.2px">8-800-333-9313</div>
<div class="t b" style="left:282px;top:632px;letter-spacing:-0.45px">edo@1c.ru</div>
<div class="t lnk fl" style="left:400px;top:632px">1С-Коннект</div>
<div class="t lnk fl" style="left:479px;top:632px">Общее состояние ЭДО</div>
<div class="t lnk fl" style="left:631px;top:632px">Настройки ЭДО</div>
<div class="t lnk fl" style="left:737px;top:632px">Архив ЭДО</div>
<svg class="abs" style="left:1326px;top:631px" width="12" height="18" viewBox="0 0 12 18"><path d="M6 0.6C9.2 0.6 11 2.9 11 5.6C11 8.2 9.2 9.6 8.8 12.6H3.2C2.8 9.6 1 8.2 1 5.6C1 2.9 2.8 0.6 6 0.6Z" fill="#ffc800" stroke="#d6c000" stroke-width="0.7"/><path d="M1.2 6.5C1 3 3 0.8 6 0.8C9 0.8 11 3 10.8 6.5Z" fill="#f8f020"/><circle cx="4.8" cy="4" r="1.8" fill="#fff" opacity="0.9"/><rect x="3.6" y="12.6" width="4.8" height="4" rx="2" fill="#c8c8c8" stroke="#8a8a8a" stroke-width="0.6"/></svg>
<div class="t lnk fl" style="left:1348px;top:632px">Есть идея?</div>
<div class="abs" style="left:302px;top:228px;width:387px;height:348px;border:5px solid #ff3333"></div>
</body></html>
